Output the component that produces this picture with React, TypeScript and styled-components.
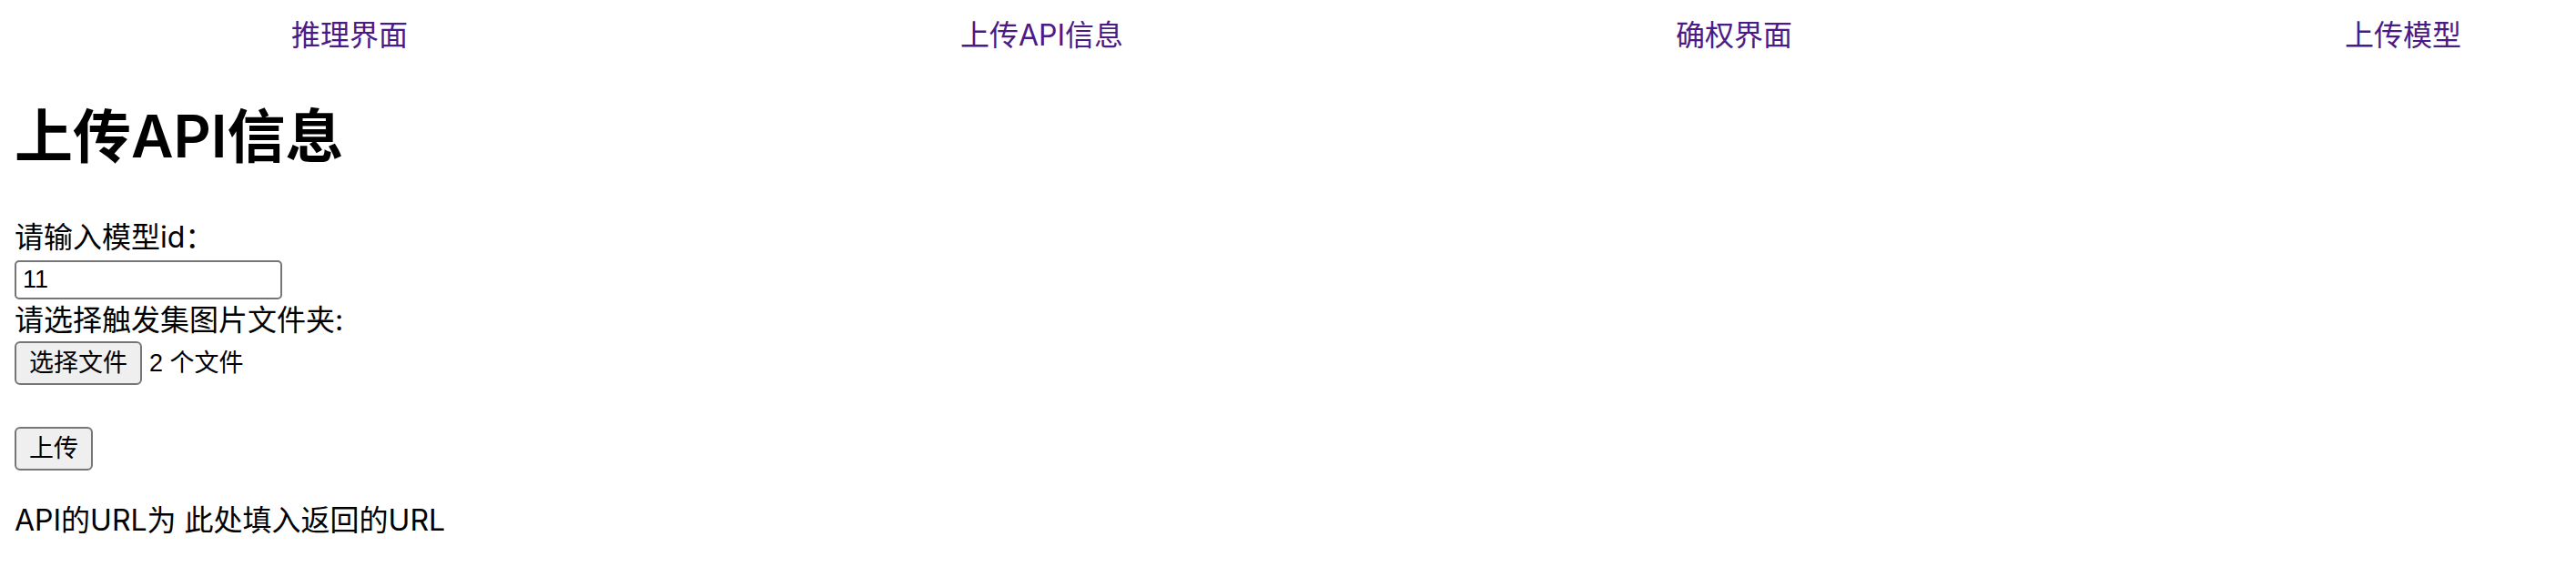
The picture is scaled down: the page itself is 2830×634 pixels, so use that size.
import React, { useRef, useState } from "react";
import styled, { createGlobalStyle } from "styled-components";

const GlobalStyle = createGlobalStyle`
  body {
    margin: 0;
    background: #fff;
    color: #000;
    font-family: Inter, "Noto Sans CJK SC", sans-serif;
    font-size: 32px;
    line-height: 46px;
  }
`;

const controlFont = `
  font-family: "Liberation Sans", "Noto Sans CJK SC", sans-serif;
  font-size: 27px;
  line-height: 40px;
`;

const Nav = styled.nav`
  display: flex;
  justify-content: space-between;
  padding: 16px 126px 0 320px;
`;

const NavLink = styled.a`
  color: #4c1a87;
  text-decoration: none;
`;

const Main = styled.main`
  padding: 0 16px 16px;
`;

const Title = styled.h1`
  margin: 42px 0;
  font-size: 64px;
  font-weight: 600;
  line-height: 92px;
`;

const Form = styled.form`
  display: flex;
  flex-direction: column;
  align-items: flex-start;
`;

const TextInput = styled.input`
  box-sizing: border-box;
  width: 294px;
  height: 43px;
  margin: 2px 0 0;
  padding: 2px 7px;
  border: 2px solid #767676;
  border-radius: 5px;
  background: #fff;
  color: #000;
  ${controlFont}
`;

const FileRow = styled.div`
  display: flex;
  align-items: center;
  gap: 8px;
  margin-bottom: 46px;
  ${controlFont}
`;

const Button = styled.button`
  box-sizing: border-box;
  height: 48px;
  padding: 0 14px;
  border: 2px solid #767676;
  border-radius: 6px;
  background: #efefef;
  color: #000;
  ${controlFont}
`;

const Result = styled.p`
  margin: 32px 0;
`;

const links = ["推理界面", "上传API信息", "确权界面", "上传模型"];

export default function App() {
  const [modelId, setModelId] = useState("11");
  const [fileCount, setFileCount] = useState(2);
  const picker = useRef<HTMLInputElement>(null);

  return (
    <>
      <GlobalStyle />
      <Nav>
        {links.map((label) => (
          <NavLink key={label} href="#">{label}</NavLink>
        ))}
      </Nav>
      <Main>
        <Title>上传API信息</Title>
        <Form onSubmit={(event) => event.preventDefault()}>
          <label htmlFor="model-id">请输入模型id：</label>
          <TextInput
            id="model-id"
            type="text"
            value={modelId}
            onChange={(event) => setModelId(event.target.value)}
          />
          <label htmlFor="trigger-files">请选择触发集图片文件夹:</label>
          <FileRow>
            <input
              id="trigger-files"
              ref={picker}
              type="file"
              multiple
              hidden
              onChange={(event) => setFileCount(event.target.files?.length ?? 0)}
            />
            <Button type="button" onClick={() => picker.current?.click()}>选择文件</Button>
            <span>{fileCount} 个文件</span>
          </FileRow>
          <Button type="submit">上传</Button>
        </Form>
        <Result>API的URL为 此处填入返回的URL</Result>
      </Main>
    </>
  );
}
